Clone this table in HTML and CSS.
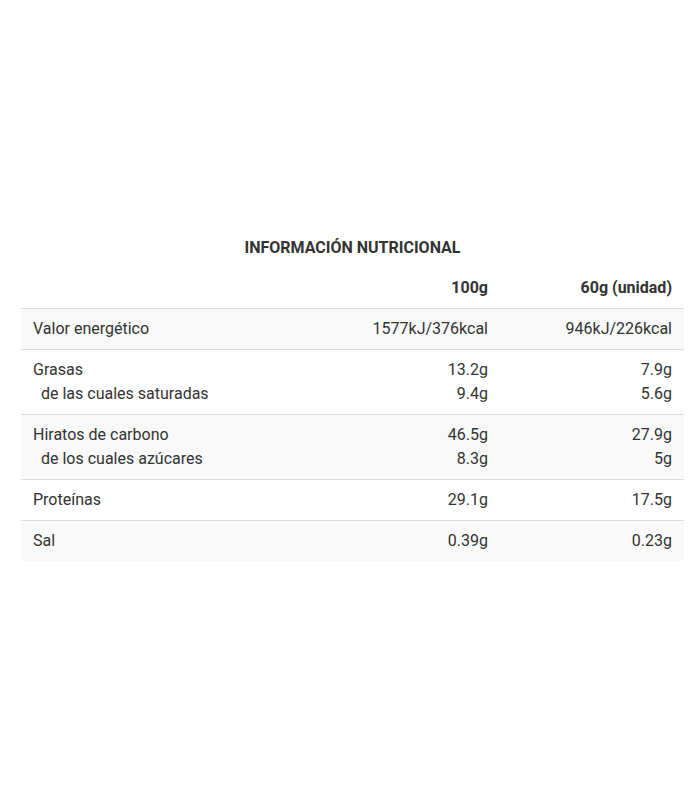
FILE: index.html
```html
<!DOCTYPE html>
<html lang="es">
<head>
<meta charset="utf-8">
<title>Información nutricional</title>
<link rel="stylesheet" href="styles.css">
</head>
<body>
<div class="page">
  <table class="nutri">
    <caption class="nutri-title">INFORMACIÓN NUTRICIONAL</caption>
    <colgroup>
      <col class="col-label">
      <col class="col-100">
      <col class="col-unit">
    </colgroup>
    <thead>
      <tr>
        <th class="label"></th>
        <th class="num">100g</th>
        <th class="num">60g (unidad)</th>
      </tr>
    </thead>
    <tbody>
      <tr class="odd">
        <td class="label">Valor energético</td>
        <td class="num">1577kJ/376kcal</td>
        <td class="num">946kJ/226kcal</td>
      </tr>
      <tr>
        <td class="label">Grasas<br><span class="sub">de las cuales saturadas</span></td>
        <td class="num">13.2g<br>9.4g</td>
        <td class="num">7.9g<br>5.6g</td>
      </tr>
      <tr class="odd">
        <td class="label">Hiratos de carbono<br><span class="sub">de los cuales azúcares</span></td>
        <td class="num">46.5g<br>8.3g</td>
        <td class="num">27.9g<br>5g</td>
      </tr>
      <tr>
        <td class="label">Proteínas</td>
        <td class="num">29.1g</td>
        <td class="num">17.5g</td>
      </tr>
      <tr class="odd last">
        <td class="label">Sal</td>
        <td class="num">0.39g</td>
        <td class="num">0.23g</td>
      </tr>
    </tbody>
  </table>
</div>
</body>
</html>
```
FILE: styles.css
```css
html, body {
  margin: 0;
  padding: 0;
  background: #ffffff;
}
body {
  font-family: Roboto, "Liberation Sans", sans-serif;
  color: #333333;
  font-size: 16px;
}
.page {
  padding: 228px 16px 0 21px;
}
.nutri {
  width: 663px;
  border-collapse: collapse;
  table-layout: fixed;
}
.col-label { width: 279px; }
.col-100 { width: 200px; }
.col-unit { width: 184px; }
.nutri-title {
  font-weight: 700;
  font-size: 16px;
  line-height: 40px;
  height: 40px;
  text-align: center;
  color: #333333;
}
.nutri th, .nutri td {
  padding: 8px 12px;
  line-height: 24px;
  vertical-align: middle;
  white-space: nowrap;
}
.nutri th {
  font-weight: 700;
  border-bottom: 1px solid #dddddd;
}
.nutri td {
  border-bottom: 1px solid #dddddd;
}
.nutri tr.last td {
  border-bottom: none;
}
.nutri tr.odd td {
  background: #f9f9f9;
}
.label {
  text-align: left;
}
.num {
  text-align: right;
}
.sub {
  padding-left: 8px;
}
```
